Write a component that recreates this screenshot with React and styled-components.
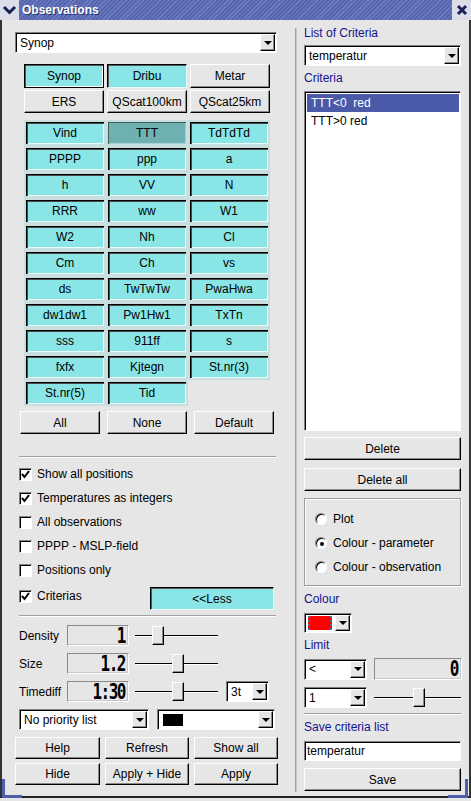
import React from 'react';
import styled, { createGlobalStyle, css } from 'styled-components';

const GlobalStyle = createGlobalStyle`
  html, body { margin: 0; padding: 0; background: #e6e6e6; }
  body { font-family: "Liberation Sans", Arial, sans-serif; font-size: 12px; color: #000; }
  * { box-sizing: border-box; }
`;

const BG = '#e6e6e6';

const cyanFill = css`
  background-color: #8ae6e6;
`;
const cyanDarkFill = css`
  background-color: #6fb0b0;
`;

const raised = css`
  background: ${BG};
  border: 1px solid;
  border-color: #ffffff #000000 #000000 #ffffff;
  box-shadow: inset -1px -1px 0 #8a8a8a;
`;

const sunken = css`
  border: 1px solid;
  border-color: #808080 #ffffff #ffffff #808080;
  box-shadow: inset 1px 1px 0 #000;
`;

const Window = styled.div`
  position: relative;
  width: 471px;
  height: 798px;
  display: flex;
  flex-direction: column;
`;

const TitleBar = styled.div`
  flex: none;
  height: 20px;
  display: flex;
  align-items: center;
  background: repeating-linear-gradient(135deg, #5666af 0 2px, #6f7ec2 2px 3px);
`;

const TitleButton = styled.div`
  width: 19px;
  height: 20px;
  background: #dcdde8;
  display: flex;
  align-items: center;
  justify-content: center;
`;

const TitleText = styled.div`
  flex: 1;
  color: #fff;
  font-weight: bold;
  font-size: 12px;
  padding-left: 3px;
  text-shadow: 1px 1px 0 #2b356f;
`;

const Frame = styled.div`
  flex: 1;
  display: flex;
  border-left: 2px solid #333;
  border-right: 2px solid #333;
  border-bottom: 2px solid #222;
  padding: 6px 8px 0 13px;
`;

const Corner = styled.span`
  position: absolute;
  bottom: 0;
  ${(p) => (p.$side === 'left' ? 'left: 2px;' : 'right: 3px;')}
  width: 20px;
  height: 19px;
  border-bottom: 3px solid #4f5fae;
  ${(p) => (p.$side === 'left' ? 'border-left: 3px solid #4f5fae;' : 'border-right: 3px solid #4f5fae;')}
`;

const LeftColumn = styled.div`
  width: 262px;
  flex: none;
  display: flex;
  flex-direction: column;
  padding-top: 6px;
`;

const VSeparator = styled.div`
  flex: none;
  width: 2px;
  margin: 2px 0 0 18px;
  height: 764px;
  background: #a2a2a2;
  border-right: 1px solid #c8c8c8;
`;

const RightColumn = styled.div`
  width: 157px;
  flex: none;
  margin-left: 7px;
  display: flex;
  flex-direction: column;
`;

/* Combo box */
const Combo = styled.div`
  ${sunken};
  background: #fff;
  width: ${(p) => p.$w}px;
  height: ${(p) => p.$h || 20}px;
  margin-left: ${(p) => p.$ml || 0}px;
  margin-top: ${(p) => p.$mt || 0}px;
  display: flex;
  align-items: stretch;
  padding: 1px 1px 1px 2px;
  flex: none;
`;

const ComboText = styled.div`
  flex: 1;
  display: flex;
  align-items: center;
  padding-left: 2px;
  white-space: nowrap;
  overflow: hidden;
`;

const ComboArrow = styled.div`
  ${raised};
  width: 15px;
  flex: none;
  display: flex;
  align-items: center;
  justify-content: center;
  &::after {
    content: '';
    border-left: 4px solid transparent;
    border-right: 4px solid transparent;
    border-top: 4px solid #000;
  }
`;

const Swatch = styled.div`
  width: ${(p) => p.$w}px;
  height: 12px;
  background: ${(p) => p.$c};
  margin: auto ${(p) => p.$mr || 0}px auto ${(p) => p.$ml || 2}px;
  ${(p) => p.$focus && 'border-left: 2px dotted #5262b4; border-right: 2px dotted #5262b4; height: 14px;'}
`;

const Spacer = styled.div`
  flex: 1;
`;

/* Buttons */
const ButtonRows = styled.div`
  margin: 11px 0 0 9px;
  display: grid;
  grid-template-columns: 80px 80px 80px;
  grid-template-rows: 24px 23px;
  column-gap: 3px;
  row-gap: 2px;
`;

const PushButton = styled.div`
  ${raised};
  display: flex;
  align-items: center;
  justify-content: center;
  white-space: nowrap;
  height: ${(p) => (p.$h ? `${p.$h}px` : 'auto')};
  margin-top: ${(p) => p.$mt || 0}px;
`;

const ToggleButton = styled.div`
  ${cyanFill};
  display: flex;
  align-items: center;
  justify-content: center;
  border: 1px solid;
  border-color: #000 #e8ffff #e8ffff #000;
  box-shadow: inset 1px 1px 0 #555;
  ${(p) => p.$focus && 'border-color: #000; box-shadow: inset 1px 1px 0 #555, inset -1px -1px 0 #fff;'}
`;

const ParamGrid = styled.div`
  margin: 7px 0 0 9px;
  display: grid;
  grid-template-columns: repeat(3, 82px);
  grid-auto-rows: 26px;
`;

const ParamCell = styled.div`
  ${(p) => (p.$active ? cyanDarkFill : cyanFill)};
  background-clip: padding-box;
  border: 2px solid #c9dede;
  box-shadow: ${(p) =>
    p.$active
      ? 'inset 1px 1px 0 #3c5c5c, inset -1px -1px 0 #a8d0d0'
      : 'inset 1px 1px 0 #000, inset 2px 2px 0 #4a4a4a, inset -1px -1px 0 #e6ffff'};
  display: flex;
  align-items: center;
  justify-content: center;
  white-space: nowrap;
`;

const ActionRow = styled.div`
  margin: 5px 0 0 5px;
  display: grid;
  grid-template-columns: 80px 80px 80px;
  column-gap: 7px;
  height: 23px;
`;

const HSeparator = styled.div`
  flex: none;
  height: 2px;
  border-top: 1px solid #a0a0a0;
  border-bottom: 1px solid #fff;
  margin-top: ${(p) => p.$mt || 0}px;
  margin-left: ${(p) => p.$ml || 0}px;
  width: ${(p) => (p.$w ? `${p.$w}px` : 'auto')};
`;

/* Checkboxes */
const CheckList = styled.div`
  display: flex;
  flex-direction: column;
  margin: 4px 0 0 4px;
`;

const CheckRow = styled.div`
  height: 24px;
  display: flex;
  align-items: center;
  gap: 5px;
`;

const CheckBoxBox = styled.div`
  ${sunken};
  width: 13px;
  height: 13px;
  background: #fff;
  flex: none;
  display: flex;
  align-items: center;
  justify-content: center;
`;

const CriteriaRow = styled.div`
  margin: 5px 0 0 4px;
  height: 23px;
  display: flex;
  align-items: flex-start;
`;

const CheckLabel = styled.div`
  display: flex;
  align-items: center;
  gap: 5px;
  margin-top: 2px;
  flex: 1;
`;

const LessButton = styled(ToggleButton)`
  width: 124px;
  height: 23px;
  margin-right: 3px;
`;

/* LCD + slider rows */
const ValueRow = styled.div`
  display: flex;
  align-items: center;
  margin-top: ${(p) => p.$mt}px;
  margin-left: 4px;
  height: 21px;
`;

const RowLabel = styled.div`
  width: 48px;
  flex: none;
`;

const Lcd = styled.div`
  border: 1px solid;
  border-color: #8a8a8a #ffffff #ffffff #8a8a8a;
  box-shadow: inset -1px -1px 0 #c8c8c8;
  width: ${(p) => p.$w}px;
  height: ${(p) => p.$h || 21}px;
  flex: none;
  display: flex;
  align-items: center;
  justify-content: flex-end;
  padding-right: 3px;
`;

const LcdDigits = styled.span`
  display: inline-block;
  font-family: "DejaVu Sans Mono", "Liberation Mono", monospace;
  font-weight: bold;
  font-size: 16px;
  letter-spacing: -1.5px;
  line-height: 1;
  transform: scaleY(1.35);
`;

const Slider = styled.div`
  position: relative;
  width: ${(p) => p.$w}px;
  height: 21px;
  flex: none;
  margin-left: ${(p) => p.$ml || 0}px;
  &::before {
    content: '';
    position: absolute;
    left: 0;
    right: 0;
    top: 10px;
    height: 1px;
    background: #000;
    box-shadow: 0 1px 0 #fff;
  }
`;

const SliderHandle = styled.div`
  ${raised};
  position: absolute;
  top: 1px;
  width: 12px;
  height: 19px;
`;

const ComboPair = styled.div`
  display: flex;
  gap: 8px;
  margin: 7px 0 0 4px;
`;

const BottomButtons = styled.div`
  margin-top: 7px;
  display: grid;
  grid-template-columns: 85px 84px 84px;
  grid-auto-rows: 22px;
  column-gap: 5px;
  row-gap: 4px;
`;

/* Right column */
const BlueLabel = styled.div`
  color: #121290;
  height: 14px;
  line-height: 14px;
  margin-top: ${(p) => p.$mt || 0}px;
  flex: none;
`;

const ListBox = styled.div`
  border: 1px solid;
  border-color: #808080 #ffffff #ffffff #808080;
  box-shadow: inset 1px 1px 0 #000;
  background: #fff;
  height: 340px;
  margin-top: 6px;
  padding: 2px 1px 0 2px;
  flex: none;
`;

const ListItem = styled.div`
  height: 18px;
  line-height: 18px;
  padding-left: 4px;
  white-space: pre;
  background: ${(p) => (p.$sel ? '#4a59a8' : 'transparent')};
  color: ${(p) => (p.$sel ? '#fff' : '#000')};
`;

const GroupBox = styled.div`
  margin-top: 7px;
  height: 88px;
  border: 1px solid #9c9c9c;
  box-shadow: inset 1px 1px 0 #fff, 1px 1px 0 #fff;
  padding: 8px 0 0 10px;
  display: flex;
  flex-direction: column;
  flex: none;
`;

const RadioRow = styled.div`
  height: 24px;
  display: flex;
  align-items: center;
  gap: 6px;
`;

const RadioCircle = styled.div`
  width: 12px;
  height: 12px;
  border-radius: 50%;
  background: #fff;
  border: 1px solid;
  border-color: #808080 #ffffff #ffffff #808080;
  box-shadow: inset 1px 1px 0 #000;
  display: flex;
  align-items: center;
  justify-content: center;
  flex: none;
  &::after {
    content: '';
    display: ${(p) => (p.$on ? 'block' : 'none')};
    width: 4px;
    height: 4px;
    border-radius: 50%;
    background: #000;
    margin: 1px 0 0 1px;
  }
`;

const LimitRow = styled.div`
  display: flex;
  align-items: center;
  gap: 7px;
  margin-top: ${(p) => p.$mt}px;
  height: ${(p) => p.$h}px;
`;

const TextInput = styled.div`
  ${sunken};
  background: #fff;
  height: 20px;
  margin-top: 7px;
  display: flex;
  align-items: center;
  padding-left: 2px;
  flex: none;
`;

const Check = () => (
  <svg width="9" height="9" viewBox="0 0 9 9">
    <polyline points="1,4 3.5,7 8,1" fill="none" stroke="#000" strokeWidth="2" />
  </svg>
);

const CheckItem = ({ on, children }) => (
  <CheckRow>
    <CheckBoxBox>{on && <Check />}</CheckBoxBox>
    <span>{children}</span>
  </CheckRow>
);

const ComboBox = ({ w, h, ml, mt, children }) => (
  <Combo $w={w} $h={h} $ml={ml} $mt={mt}>
    {children}
    <ComboArrow />
  </Combo>
);

const LcdNumber = ({ w, h, value }) => (
  <Lcd $w={w} $h={h}>
    <LcdDigits>{value}</LcdDigits>
  </Lcd>
);

const params = [
  ['Vind', 'TTT', 'TdTdTd'],
  ['PPPP', 'ppp', 'a'],
  ['h', 'VV', 'N'],
  ['RRR', 'ww', 'W1'],
  ['W2', 'Nh', 'Cl'],
  ['Cm', 'Ch', 'vs'],
  ['ds', 'TwTwTw', 'PwaHwa'],
  ['dw1dw1', 'Pw1Hw1', 'TxTn'],
  ['sss', '911ff', 's'],
  ['fxfx', 'Kjtegn', 'St.nr(3)'],
  ['St.nr(5)', 'Tid'],
];

export default function App() {
  return (
    <>
      <GlobalStyle />
      <Window>
        <TitleBar>
          <TitleButton>
            <svg width="15" height="10" viewBox="0 0 15 10">
              <polyline points="2,2 7.5,7.5 13,2" fill="none" stroke="#18205a" strokeWidth="3" />
            </svg>
          </TitleButton>
          <TitleText>Observations</TitleText>
          <TitleButton>
            <svg width="12" height="12" viewBox="0 0 12 12">
              <path d="M2 2 L10 10 M10 2 L2 10" stroke="#18205a" strokeWidth="3" />
            </svg>
          </TitleButton>
        </TitleBar>
        <Frame>
          <LeftColumn>
            <ComboBox w={262} h={21}>
              <ComboText>Synop</ComboText>
            </ComboBox>

            <ButtonRows>
              <ToggleButton $focus>Synop</ToggleButton>
              <ToggleButton>Dribu</ToggleButton>
              <PushButton>Metar</PushButton>
              <PushButton>ERS</PushButton>
              <PushButton>QScat100km</PushButton>
              <PushButton>QScat25km</PushButton>
            </ButtonRows>

            <ParamGrid>
              {params.flat().map((p) => (
                <ParamCell key={p} $active={p === 'TTT'}>
                  {p}
                </ParamCell>
              ))}
            </ParamGrid>

            <ActionRow>
              <PushButton>All</PushButton>
              <PushButton>None</PushButton>
              <PushButton>Default</PushButton>
            </ActionRow>

            <HSeparator $mt={22} $ml={4} $w={257} />

            <CheckList>
              <CheckItem on>Show all positions</CheckItem>
              <CheckItem on>Temperatures as integers</CheckItem>
              <CheckItem>All observations</CheckItem>
              <CheckItem>PPPP - MSLP-field</CheckItem>
              <CheckItem>Positions only</CheckItem>
            </CheckList>
            <CriteriaRow>
              <CheckLabel>
                <CheckBoxBox>
                  <Check />
                </CheckBoxBox>
                <span>Criterias</span>
              </CheckLabel>
              <LessButton>&lt;&lt;Less</LessButton>
            </CriteriaRow>

            <HSeparator $mt={5} $ml={4} $w={257} />

            <ValueRow $mt={8}>
              <RowLabel>Density</RowLabel>
              <LcdNumber w={62} value="1" />
              <Slider $w={83} $ml={6}>
                <SliderHandle style={{ left: 17 }} />
              </Slider>
            </ValueRow>
            <ValueRow $mt={7}>
              <RowLabel>Size</RowLabel>
              <LcdNumber w={62} value="1.2" />
              <Slider $w={83} $ml={6}>
                <SliderHandle style={{ left: 37 }} />
              </Slider>
            </ValueRow>
            <ValueRow $mt={7}>
              <RowLabel>Timediff</RowLabel>
              <LcdNumber w={62} value="1:30" />
              <Slider $w={83} $ml={6}>
                <SliderHandle style={{ left: 37 }} />
              </Slider>
              <ComboBox w={43} h={21} ml={8}>
                <ComboText>3t</ComboText>
              </ComboBox>
            </ValueRow>

            <ComboPair>
              <ComboBox w={130} h={21}>
                <ComboText>No priority list</ComboText>
              </ComboBox>
              <ComboBox w={118} h={21}>
                <Swatch $w={20} $c="#000" $ml={3} />
                <Spacer />
              </ComboBox>
            </ComboPair>

            <BottomButtons>
              <PushButton>Help</PushButton>
              <PushButton>Refresh</PushButton>
              <PushButton>Show all</PushButton>
              <PushButton>Hide</PushButton>
              <PushButton>Apply + Hide</PushButton>
              <PushButton>Apply</PushButton>
            </BottomButtons>
          </LeftColumn>

          <VSeparator />

          <RightColumn>
            <BlueLabel>List of Criteria</BlueLabel>
            <ComboBox w={157} h={21} mt={5}>
              <ComboText>temperatur</ComboText>
            </ComboBox>
            <BlueLabel $mt={5}>Criteria</BlueLabel>
            <ListBox>
              <ListItem $sel>{'TTT<0  red'}</ListItem>
              <ListItem>{'TTT>0 red'}</ListItem>
            </ListBox>
            <PushButton $h={23} $mt={6}>Delete</PushButton>
            <PushButton $h={23} $mt={8}>Delete all</PushButton>
            <GroupBox>
              <RadioRow>
                <RadioCircle />
                <span>Plot</span>
              </RadioRow>
              <RadioRow>
                <RadioCircle $on />
                <span>Colour - parameter</span>
              </RadioRow>
              <RadioRow>
                <RadioCircle />
                <span>Colour - observation</span>
              </RadioRow>
            </GroupBox>
            <BlueLabel $mt={6}>Colour</BlueLabel>
            <ComboBox w={48} h={20} mt={7}>
              <Swatch $w={26} $c="#ff0000" $ml={1} $mr={3} $focus />
            </ComboBox>
            <BlueLabel $mt={5}>Limit</BlueLabel>
            <LimitRow $mt={6} $h={22}>
              <ComboBox w={63} h={21}>
                <ComboText>&lt;</ComboText>
              </ComboBox>
              <LcdNumber w={88} h={22} value="0" />
            </LimitRow>
            <LimitRow $mt={7} $h={21}>
              <ComboBox w={63} h={21}>
                <ComboText>1</ComboText>
              </ComboBox>
              <Slider $w={87}>
                <SliderHandle style={{ left: 39 }} />
              </Slider>
            </LimitRow>
            <HSeparator $mt={5} />
            <BlueLabel $mt={5}>Save criteria list</BlueLabel>
            <TextInput>temperatur</TextInput>
            <PushButton $h={23} $mt={7}>Save</PushButton>
          </RightColumn>
        </Frame>
        <Corner $side="left" />
        <Corner $side="right" />
      </Window>
    </>
  );
}
